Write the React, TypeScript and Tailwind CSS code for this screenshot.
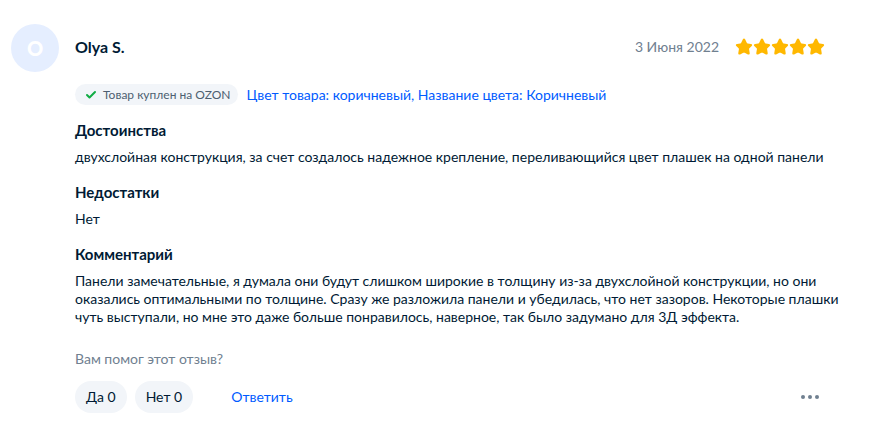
import { Check } from "lucide-react";

interface ReviewSection {
  title: string;
  text: string;
}

const sections: ReviewSection[] = [
  {
    title: "Достоинства",
    text: "двухслойная конструкция, за счет создалось надежное крепление, переливающийся цвет плашек на одной панели",
  },
  { title: "Недостатки", text: "Нет" },
  {
    title: "Комментарий",
    text: "Панели замечательные, я думала они будут слишком широкие в толщину из-за двухслойной конструкции, но они оказались оптимальными по толщине. Сразу же разложила панели и убедилась, что нет зазоров. Некоторые плашки чуть выступали, но мне это даже больше понравилось, наверное, так было задумано для 3Д эффекта.",
  },
];

function Star() {
  return (
    <svg viewBox="0 0 18 18" className="size-[18px]" fill="#ffb800">
      <path d="M7.9 1.3c.5-1 1.700-1 2.200 0l1.700 3.500c.2.400.5.600.9.700l3.300.4c1.200.2 1.500 1.300.7 2.100l-2.300 2.300c-.3.3-.4.6-.3 1l.6 3.700c.2 1.200-.8 1.900-1.800 1.400l-3.200-1.600c-.4-.2-1-.2-1.400 0l-3.200 1.600c-1 .5-2-.2-1.800-1.400l.6-3.700c.1-.4 0-.7-.3-1L1.300 8c-.8-.8-.5-1.900.7-2.100l3.300-.4c.4-.1.7-.3.9-.7z" />
    </svg>
  );
}

function Rating({ value }: { value: number }) {
  return (
    <div className="flex" role="img" aria-label={String(value)}>
      {Array.from({ length: value }, (_, i) => (
        <Star key={i} />
      ))}
    </div>
  );
}

function VoteButton({ label, count }: { label: string; count: number }) {
  return (
    <button className="h-8 rounded-full bg-[#f2f5f9] px-[11px] text-sm">
      {label} {count}
    </button>
  );
}

export default function App() {
  return (
    <article className="flex gap-4 bg-white pt-6 pr-14 pb-5 pl-[11px] font-['Lato','Noto_Sans',sans-serif] text-sm text-[#001a34]">
      <div className="flex size-12 shrink-0 items-center justify-center rounded-full bg-[#e5eeff] text-xl leading-5 font-black text-white">
        O
      </div>

      <div className="min-w-0 flex-1">
        <header className="flex h-[46px] items-center justify-between pr-[14px]">
          <h2 className="text-base font-bold">Olya S.</h2>
          <div className="flex items-center gap-4">
            <span className="text-[#708090]">3 Июня 2022</span>
            <Rating value={5} />
          </div>
        </header>

        <div className="mt-[14px] flex items-center gap-2">
          <span className="flex h-[21px] items-center gap-1.5 rounded-full bg-[#f2f5f9] pr-2 pl-[10px] text-xs text-[#4d5f71]">
            <Check size={12} strokeWidth={4} className="text-[#10ac44]" />
            Товар куплен на OZON
          </span>
          <a href="#" className="leading-5 text-[#005bff]">
            Цвет товара: коричневый, Название цвета: Коричневый
          </a>
        </div>

        <div className="mt-[15px] space-y-4">
          {sections.map((section) => (
            <section key={section.title}>
              <h3 className="mb-2 text-[15px] leading-5 font-bold">
                {section.title}
              </h3>
              <p className="leading-[18px]">{section.text}</p>
            </section>
          ))}
        </div>

        <p className="mt-6 leading-[18px] text-[#708090]">
          Вам помог этот отзыв?
        </p>
        <div className="mt-[13px] flex items-center pr-5">
          <div className="flex gap-2">
            <VoteButton label="Да" count={0} />
            <VoteButton label="Нет" count={0} />
          </div>
          <button className="ml-[38px] text-[#005bff]">Ответить</button>
          <button aria-label="Ещё" className="ml-auto">
            <svg viewBox="0 0 18 4" className="h-1 w-[18px]" fill="#708090">
              <circle cx="2" cy="2" r="2" />
              <circle cx="9" cy="2" r="2" />
              <circle cx="16" cy="2" r="2" />
            </svg>
          </button>
        </div>
      </div>
    </article>
  );
}
